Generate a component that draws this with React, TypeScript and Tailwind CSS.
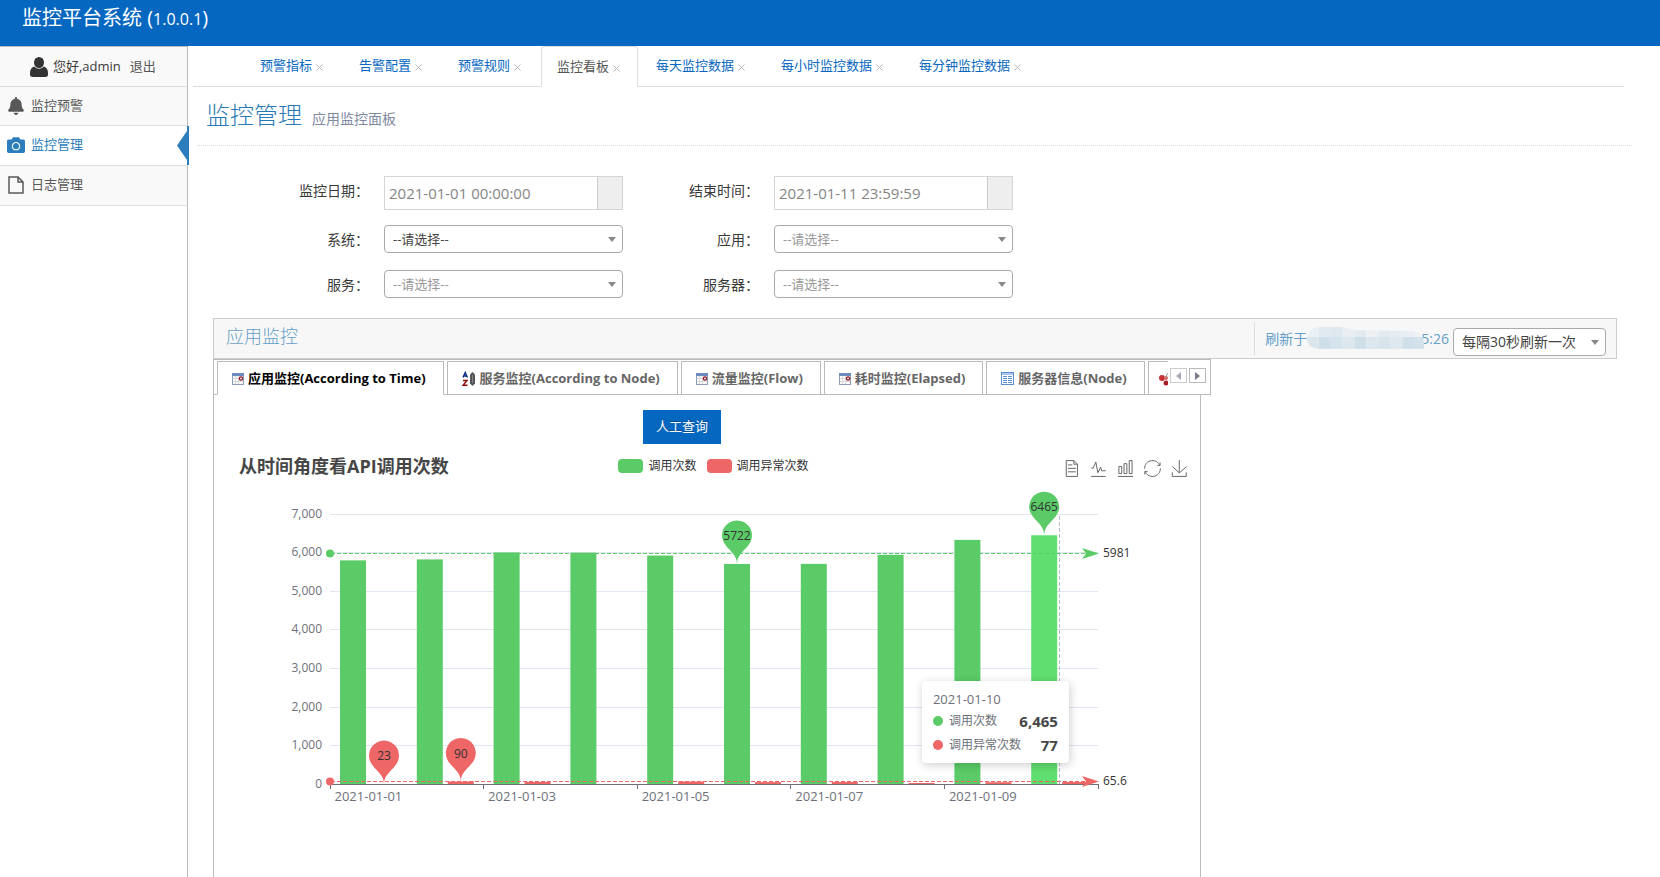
import { useState } from 'react';
import { FaBell, FaCamera } from 'react-icons/fa';

const PAGE_TABS = ['预警指标', '告警配置', '预警规则', '监控看板', '每天监控数据', '每小时监控数据', '每分钟监控数据'];

const CHART_TABS = [
  { label: '应用监控(According to Time)', icon: 'calendar' },
  { label: '服务监控(According to Node)', icon: 'sort'     },
  { label: '流量监控(Flow)',              icon: 'calendar' },
  { label: '耗时监控(Elapsed)',           icon: 'calendar' },
  { label: '服务器信息(Node)',            icon: 'table'    },
];

const CALLS  = [5815, 5840, 6020, 6015, 5940, 5722, 5725, 5960, 6345, 6465];
const ERRORS = [23, 90, 80, 25, 88, 75, 78, 52, 72, 77];
const DATES  = ['2021-01-01', '2021-01-03', '2021-01-05', '2021-01-07', '2021-01-09'];

const GREEN = '#5acb66';
const RED = '#ee6666';

// plot area inside the chart svg
const LEFT = 117;
const RIGHT = 885;
const BASE = 301;
const STEP = (RIGHT - LEFT) / 10;
const y = (v: number) => BASE - v * 0.03863;

const TOOLS = [
  { name: '数据视图', d: 'M17.5,17.3H33 M45.4,29.5h-28 M11.5,2v56H51V14.8L38.4,2H11.5z M38.4,2.2v12.7H51 M45.4,41.7h-28' },
  { name: '折线图', d: 'M4.1,28.9h7.1l9.3-22l7.4,38l9.7-19.7l3,12.8h14.9M4.1,58h51.4' },
  { name: '柱状图', d: 'M6.7,22.9h10V48h-10V22.9zM24.9,13h10v35h-10V13zM43.2,2h10v46h-10V2zM3.1,58h53.7' },
  { name: '还原', d: 'M47,18.9h9.8V8.7 M56.3,20.1 C52.1,9,40.5,0.6,26.8,2.1C12.6,3.7,1.6,16.2,2.1,30.6 M13,41.1H3.1v10.2 M3.7,39.9c4.2,11.1,15.8,19.5,29.5,18 c14.2-1.6,25.2-14.1,24.7-28.5' },
  { name: '保存为图片', d: 'M4.7,22.9L29.3,45.5L54.7,23.4M4.6,43.6L4.6,58L53.8,58L53.8,43.6M29.2,45.1L29.2,0' },
];

function TabIcon({ name }: { name: string }) {
  if (name === 'sort') {
    return (
      <svg width="14" height="16" viewBox="0 0 14 16" className="shrink-0" fill="none">
        <path d="M1 6.500L3.200 1.500L5.500 6.500M1.800 5H4.700" stroke="#0a2a8c" strokeWidth="1.400" />
        <path d="M1 9.500H5L1 14.300H5.500" stroke="#8c0a0a" strokeWidth="1.400" />
        <path d="M10.500 1L13 3.500V12.500L10.500 15L8 12.500V3.500z" fill="#555" />
        <path d="M10.500 4V12" stroke="#888" />
      </svg>
    );
  }
  if (name === 'table') {
    return (
      <svg width="13" height="13" viewBox="0 0 13 13" className="shrink-0">
        <rect x="0.5" y="0.5" width="12" height="12" fill="#fff" stroke="#5b8fd0" />
        <rect x="1" y="1" width="11" height="2" fill="#a9c6ee" />
        <path d="M2 4.500h4M7 4.500h4M2 6.500h4M7 6.500h4M2 8.500h4M7 8.500h4M2 10.500h4M7 10.500h4" stroke="#5b8fd0" />
      </svg>
    );
  }
  return (
    <svg width="12" height="12" viewBox="0 0 12 12" className="shrink-0">
      <rect x="0.5" y="0.5" width="11" height="11" fill="#fff" stroke="#8d9db5" />
      <rect width="12" height="3" fill="#6a8cbc" />
      <path d="M1 5.500h10M1 8.500h10M3.500 3v8M6.500 3v8" stroke="#d9d9d9" />
      <circle cx="9" cy="5.500" r="1.600" fill="#fff" stroke="#8c0a14" strokeWidth="1.200" />
    </svg>
  );
}

function SelectBox({ id, label, dark, options }: { id: string; label?: string; dark?: boolean; options: string[] }) {
  return (
    <div className="relative">
      <select
        id={id}
        aria-label={label}
        className={`block w-full h-7 appearance-none rounded border border-[#aaa] bg-white pl-2 pr-6 pt-px ${
          dark ? 'text-[#444]' : 'text-[#999]'
        }`}
      >
        {options.map((o) => <option key={o}>{o}</option>)}
      </select>
      <span className="pointer-events-none absolute right-[7px] top-3 border-x-4 border-t-5 border-x-transparent border-t-[#888]" />
    </div>
  );
}

function DateBox({ id, value }: { id: string; value: string }) {
  return (
    <div className="flex h-[34px] border border-[#d5d5d5]">
      <input id={id} defaultValue={value} className="min-w-0 flex-1 px-1 text-[15px] text-[#858585] outline-none" />
      <span className="w-[25px] border-l border-[#ccc] bg-[#eee]" />
    </div>
  );
}

function Pin({ x, top, value, color }: { x: number; top: number; value: number; color: string }) {
  return (
    <g transform={`translate(${x} ${top})`}>
      <path
        d="M-13.55,-22.14A15,15 0 1 1 13.55,-22.14C9.69,-14.01 0,-10.5 0,0C0,-10.5 -9.69,-14.01 -13.55,-22.14z"
        fill={color}
      />
      <text y="-24" textAnchor="middle" fontSize="12" fill="#333">{value}</text>
    </g>
  );
}

function AverageLine({ value, color }: { value: number; color: string }) {
  const at = Math.round(y(value)) - 0.5;
  return (
    <g>
      <path d={`M${LEFT} ${at}H${RIGHT - 12}`} stroke={color} strokeDasharray="4 2" />
      <circle cx={LEFT - 1} cy={at} r="4" fill={color} />
      <path d={`M${RIGHT} ${at}l-17 -5.500l4 5.500l-4 5.500z`} fill={color} />
      <text x={RIGHT + 4} y={at + 3} fontSize="12" fill="#333">{value}</text>
    </g>
  );
}

function Chart() {
  return (
    <svg viewBox="0 0 986 330" className="block w-full h-auto">
      {[0, 1, 2, 3, 4, 5, 6, 7].map((k) => {
        const line = Math.round(y(k * 1000)) - 0.5;
        return (
          <g key={k}>
            {k > 0 && <path d={`M${LEFT - 1} ${line}H${RIGHT - 1}`} stroke="#e0e6f1" />}
            <text x={LEFT - 9} y={line + 3} textAnchor="end" fontSize="12" fill="#6e7079">
              {(k * 1000).toLocaleString('en-US')}
            </text>
          </g>
        );
      })}

      {CALLS.map((v, i) => (
        <rect key={i} x={LEFT + STEP * i + 9} y={y(v)} width="26" height={BASE - y(v)} fill={i === 9 ? '#61de70' : GREEN} />
      ))}
      {ERRORS.map((v, i) => (
        <rect key={i} x={LEFT + STEP * i + 40} y={y(v)} width="26" height={BASE - y(v)} fill={RED} />
      ))}

      <path d={`M${LEFT - 1} ${BASE - 0.5}H${RIGHT}`} stroke="#6e7079" />
      {[0, 2, 4, 6, 8, 10].map((k) => (
        <path key={k} d={`M${Math.floor(LEFT + STEP * k) - 0.5} ${BASE}v4`} stroke="#6e7079" />
      ))}
      {DATES.map((d, i) => (
        <text key={d} x={LEFT + STEP * (i * 2 + 0.5) - 1} y={BASE + 16} textAnchor="middle" fontSize="13" fill="#6e7079">
          {d}
        </text>
      ))}

      <path d={`M845.5 32V${BASE - 1}`} stroke="#b9bec9" strokeDasharray="4 2" />
      <AverageLine value={5981} color={GREEN} />
      <AverageLine value={65.6} color={RED} />
      <Pin x={LEFT + STEP * 5 + 22} top={y(5722)} value={5722} color={GREEN} />
      <Pin x={LEFT + STEP * 9 + 22} top={y(6465)} value={6465} color={GREEN} />
      <Pin x={LEFT + 53} top={y(23)} value={23} color={RED} />
      <Pin x={LEFT + STEP + 53} top={y(90)} value={90} color={RED} />
    </svg>
  );
}

function Tooltip() {
  return (
    <div className="absolute left-[71.8%] top-[197px] w-[147px] rounded bg-white px-[11px] pt-2 pb-[6px] text-[#6e7079] shadow-[1px_2px_10px_rgba(0,0,0,0.2)]">
      <div className="text-[13px] leading-5">2021-01-10</div>
      {[
        { name: '调用次数', value: '6,465', dot: 'bg-[#5acb66]' },
        { name: '调用异常次数', value: '77', dot: 'bg-[#ee6666]' },
      ].map((row) => (
        <div key={row.name} className="flex h-6 items-center gap-[6px] text-xs">
          <span className={`size-[10px] rounded-full ${row.dot}`} />
          <span className="flex-1 whitespace-nowrap">{row.name}</span>
          <b className="text-[15px] text-[#464646]">{row.value}</b>
        </div>
      ))}
    </div>
  );
}

// blurred-out part of the refresh time
function Mosaic() {
  const top = ['#eaf0f4', '#e2eaf1', '#dfe8ef', '#e9eef3', '#e3ebf1', '#edf1f4', '#e3ebf1', '#e6edf2', '#e8eef3', '#edf1f4'];
  const bottom = ['#dbe5ec', '#cfdfe9', '#d5e3ec', '#dde7ed', '#cfdfe9', '#dbe6ed', '#d8e4ec', '#dfe8ee', '#d0e0ea', '#d3e1ea'];
  return (
    <svg width="118" height="24" viewBox="0 0 119 24" className="-mr-1 relative shrink-0">
      <clipPath id="smudge">
        <path d="M10 0H34L50 3L108 4Q118 6 118 16V22H12Q1 22 0 12Q1 2 10 0z" />
      </clipPath>
      <g clipPath="url(#smudge)">
        {top.map((c, i) => <rect key={i} x={i * 12} y="0" width="12" height="10" fill={c} />)}
        {bottom.map((c, i) => <rect key={i} x={i * 12} y="10" width="12" height="12" fill={c} />)}
      </g>
    </svg>
  );
}

export default function App() {
  const [tab, setTab] = useState(0);

  return (
    <div className="flex min-h-screen flex-col bg-white font-['Open_Sans','Noto_Sans_CJK_SC',sans-serif] text-[13px] text-[#393939]">
      <header className="flex h-[46px] items-start bg-[#0667c1] pl-[22px] pt-1 text-xl leading-7 text-white">
        <h1>监控平台系统 (<span className="text-base">1.0.0.1</span>)</h1>
      </header>

      <div className="flex flex-1">
        {/* Sidebar */}
        <aside className="w-[188px] shrink-0 border-r border-t border-[#bbb]">
          <div className="flex h-10 items-center gap-[5px] border-b border-[#ddd] bg-[#f9f9f9] pl-[30px]">
            <svg width="18" height="20" viewBox="0 0 18 20" fill="#333">
              <ellipse cx="9" cy="5.500" rx="5" ry="5.500" />
              <path d="M4 9.500Q9 14 14 9.500Q18 11 18 16V17.500Q18 20 15 20H3Q0 20 0 17.500V16Q0 11 4 9.500z" />
            </svg>
            <span>您好,admin</span>
            <a href="#logout" className="ml-1 text-[#555]">退出</a>
          </div>
          <nav>
            <a href="#alert" className="flex h-[39px] items-center gap-[7px] border-b border-[#e0e0e0] bg-[#f9f9f9] pl-2 pb-px text-[#585858]">
              <FaBell className="w-4 text-lg" />
              监控预警
            </a>
            <a href="#manage" className="relative flex h-10 items-center gap-[6px] border-b border-[#e0e0e0] bg-white pl-[7px] pb-px text-[#2b7dbc]">
              <FaCamera className="text-lg" />
              监控管理
              <svg width="12" height="39" viewBox="0 0 12 39" className="absolute -right-[2px] top-0" fill="#2b7dbc">
                <path d="M0 19.500L10 5V0H12V39H10V34z" />
              </svg>
            </a>
            <a href="#log" className="flex h-10 items-center gap-[7px] border-b border-[#e0e0e0] bg-[#f9f9f9] pl-2 pb-px text-[#585858]">
              <svg width="16" height="18" viewBox="0 0 16 18" fill="none" stroke="#585858" strokeWidth="1.500">
                <path d="M1 1H10L15 6V17H1zM10 1V6H15" />
              </svg>
              日志管理
            </a>
          </nav>
        </aside>

        <main className="flex min-w-0 flex-1 flex-col">
          {/* Page tabs */}
          <ul className="ml-[5px] mr-9 flex h-[41px] gap-[2px] border-b border-[#ddd] pl-[51px]">
            {PAGE_TABS.map((name) => {
              const active = name === '监控看板';
              return (
                <li
                  key={name}
                  className={`flex items-center gap-1 rounded-t border px-[15px] ${
                    active ? '-mb-px border-[#ddd] border-b-white bg-white text-[#555]' : 'border-transparent text-[#0667c1]'
                  }`}
                >
                  <a href="#tab" className="whitespace-nowrap">{name}</a>
                  <button type="button" aria-label="关闭" className="w-[9px] text-[#bbb]">
                    <svg width="7" height="7" viewBox="0 0 7 7" stroke="currentColor" className="mt-[3px]">
                      <path d="M0.500 0.500L6.500 6.500M6.500 0.500L0.500 6.500" />
                    </svg>
                  </button>
                </li>
              );
            })}
          </ul>

          <div className="ml-[10px] mr-7 flex h-[59px] items-baseline gap-[10px] border-b border-dotted border-[#ddd] pl-2 pt-[10px]">
            <h2 className="text-2xl leading-9 font-light text-[#2679b5]">监控管理</h2>
            <small className="text-sm text-[#8089a0]">应用监控面板</small>
          </div>

          {/* Filters */}
          <form className="mt-[30px] grid grid-cols-[181px_239px_121px_239px] gap-x-[15px] gap-y-[15px] [&>label]:text-right [&>label]:text-sm [&>label]:leading-[30px]">
            <label htmlFor="start">监控日期：</label>
            <DateBox id="start" value="2021-01-01 00:00:00" />
            <label htmlFor="end">结束时间：</label>
            <DateBox id="end" value="2021-01-11 23:59:59" />
            <label htmlFor="system">系统：</label>
            <SelectBox id="system" dark options={['--请选择--']} />
            <label htmlFor="app">应用：</label>
            <SelectBox id="app" options={['--请选择--']} />
            <label htmlFor="service">服务：</label>
            <SelectBox id="service" options={['--请选择--']} />
            <label htmlFor="server">服务器：</label>
            <SelectBox id="server" options={['--请选择--']} />
          </form>

          {/* Panel */}
          <section className="ml-[25px] mr-[43px] mt-[18px] flex flex-1 flex-col">
            <div className="flex h-[41px] items-center border border-[#ccc] bg-[#f7f7f7] pl-3 pr-[10px]">
              <h3 className="flex-1 pb-[6px] text-lg font-light text-[#669fc7]">应用监控</h3>
              <div className="flex h-[33px] items-center border-l border-[#ddd] pl-[10px] text-sm text-[#669fc7]">
                <span>刷新于</span>
                <Mosaic />
                <span>5:26</span>
                <div className="ml-1 mt-[6px] w-[153px]">
                  <SelectBox id="refresh" label="刷新频率" dark options={['每隔30秒刷新一次']} />
                </div>
              </div>
            </div>

            <div className="flex h-9 w-full max-w-[998px] border border-[#bbb] pl-[3px] pt-px">
              <div role="tablist" className="-mb-px flex min-w-0 flex-1 gap-[3px] overflow-hidden">
                {CHART_TABS.map((t, i) => (
                  <button
                    key={t.label}
                    type="button"
                    role="tab"
                    aria-selected={tab === i}
                    onClick={() => setTab(i)}
                    className={`flex shrink-0 items-center gap-1 whitespace-nowrap border border-[#bbb] pl-[14px] pr-[17px] pt-px text-[13px] font-bold ${
                      tab === i ? 'border-b-white text-black' : 'text-[#666]'
                    }`}
                  >
                    <TabIcon name={t.icon} />
                    {t.label}
                  </button>
                ))}
                <button type="button" role="tab" aria-label="更多" className="flex w-12 shrink-0 items-center border border-[#bbb] pl-[10px] pt-px">
                  <svg width="14" height="14" viewBox="0 0 14 14">
                    <circle cx="3" cy="6" r="3" fill="#c83232" />
                    <circle cx="7" cy="11" r="2.500" fill="#a81e28" />
                    <circle cx="7" cy="6" r="2" fill="#d86a6a" />
                    <path d="M6 6L9 1" stroke="#999" />
                  </svg>
                </button>
              </div>
              <div className="flex gap-[2px] pl-[2px] pr-1 pt-[7px]">
                <button type="button" aria-label="向左" className="flex h-[15px] w-[17px] items-center justify-center border border-[#ccc]">
                  <span className="border-y-4 border-r-5 border-y-transparent border-r-[#a5a8b5]" />
                </button>
                <button type="button" aria-label="向右" className="flex h-[15px] w-[17px] items-center justify-center border border-[#bbb]">
                  <span className="border-y-4 border-l-5 border-y-transparent border-l-[#777a88]" />
                </button>
              </div>
            </div>

            <div className="w-full max-w-[988px] flex-1 border-x border-[#bbb] pt-[15px]">
              <div className="flex justify-center pr-[50px]">
                <button type="button" className="h-[34px] bg-[#0667c1] px-[13px] text-[13px] text-white [text-shadow:0_-1px_0_rgba(0,0,0,0.25)]">
                  人工查询
                </button>
              </div>

              <div className="mt-2 grid grid-cols-[1fr_auto_1fr] pl-[25px] pr-3">
                <h4 className="text-lg leading-7 font-bold text-[#464646]">从时间角度看API调用次数</h4>
                <div className="flex gap-[10px] text-xs leading-6 text-[#333]">
                  <span className="flex items-center gap-[5px]">
                    <i className="h-[14px] w-[25px] rounded bg-[#5acb66]" />调用次数
                  </span>
                  <span className="flex items-center gap-[5px]">
                    <i className="h-[14px] w-[25px] rounded bg-[#ee6666]" />调用异常次数
                  </span>
                </div>
                <div className="flex items-center justify-end gap-[10px] pt-1">
                  {TOOLS.map((t) => (
                    <button key={t.name} type="button" aria-label={t.name}>
                      <svg width="17" height="17" viewBox="0 0 60 60" fill="none" stroke="#666" strokeWidth="3.500">
                        <path d={t.d} />
                      </svg>
                    </button>
                  ))}
                </div>
              </div>

              <div className="relative mt-1">
                <Chart />
                <Tooltip />
              </div>
            </div>
          </section>
        </main>
      </div>
    </div>
  );
}
